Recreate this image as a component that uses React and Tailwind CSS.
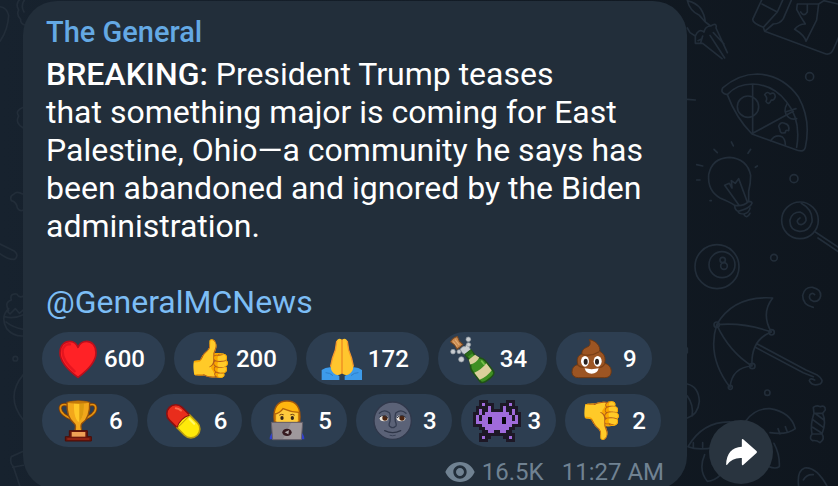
import React from 'react'
import clsx from 'clsx'
import { MdVisibility } from 'react-icons/md'

const INVADER = [
    '..kkk......kkk..',
    '..kpkkk..kkkpk..',
    '.kkkkpk..kpkkkk.',
    '.kpkkpkkkkpkkpk.',
    'kkpkppppppppkpkk',
    'kpkppppppppppkpk',
    'kpkppppppppppkpk',
    'kppppppppppppppk',
    'kkkppppppppppkkk',
    '..kkppppppppkk..',
    '...kkppkkppkk...',
    '..kkkkkkkkkkkk..',
    '..kpkk....kkpk..',
    '..kkk......kkk..',
]

const Icon = ({ children }) => (
    <svg viewBox="0 0 144 126" className="w-12 h-[42px] shrink-0 overflow-visible" aria-hidden="true">
        {children}
    </svg>
)

const Emoji = ({ children }) => (
    <span className="text-[37px] leading-[42px] font-['Noto_Color_Emoji',sans-serif]">{children}</span>
)

const Heart = () => (
    <Icon>
        <path d="M72 118C42 96 18 70 18 44C18 22 32 10 47 10C60 10 68 18 72 28C76 18 84 10 98 10C113 10 126 22 126 44C126 70 102 96 72 118Z" fill="#ff2226" stroke="#b90f1c" strokeWidth="5" strokeLinejoin="round" />
        <path d="M26 40C27 24 38 17 48 19M26 42C26 62 44 84 62 100" fill="none" stroke="#e5151f" strokeWidth="7" strokeLinecap="round" />
    </Icon>
)

const FoldedHands = () => (
    <Icon>
        <path d="M11 96Q24 86 42 88L54 108L64 114V126H11Z" fill="#3d9bea" />
        <path d="M132 96Q120 86 102 88L90 108L80 114V126H132Z" fill="#3d9bea" />
        <path d="M24 104Q36 104 44 112M120 104Q108 104 100 112" fill="none" stroke="#2b7fcb" strokeWidth="3" strokeLinecap="round" />
        <path d="M72 6C66 0 58 2 56 10L52 36C46 50 41 66 38 84Q38 104 54 110Q64 114 72 106Q80 114 90 110Q106 104 106 84C103 66 98 50 92 36L88 10C86 2 78 0 72 6Z" fill="#ffc62e" />
        <path d="M56 10L52 36C46 50 41 66 38 84M88 10L92 36C98 50 103 66 106 84" fill="none" stroke="#f3962c" strokeWidth="4" strokeLinecap="round" />
        <path d="M72 6V106" fill="none" stroke="#ee8c22" strokeWidth="4" strokeLinecap="round" />
    </Icon>
)

const Champagne = () => (
    <Icon>
        <g transform="translate(20 14) rotate(-38)">
            <path d="M-13-13Q0-19 13-13L9 2L11 16H-11L-9 2Z" fill="#c98a50" stroke="#7c4a22" strokeWidth="3" />
            <path d="M-6-9V10M2-10V10" stroke="#e3ac74" strokeWidth="3" />
        </g>
        <g fill="#c9cdd1" stroke="#8f979f" strokeWidth="2">
            <path d="M30 34Q40 22 46 26L52 14L58 28L64 40L50 52L38 46Z" />
            <circle cx="9" cy="41" r="7" />
            <circle cx="55" cy="4" r="7" />
            <circle cx="56" cy="20" r="6" />
            <circle cx="27" cy="41" r="6" />
            <circle cx="34" cy="64" r="8" />
        </g>
        <g transform="translate(54 43) rotate(-38)">
            <path d="M-11 0H11V22C12 34 25 36 25 52V92Q25 102 0 102Q-25 102-25 92V52C-25 36-12 34-11 22Z" fill="#3f8f22" stroke="#1f5216" strokeWidth="5" strokeLinejoin="round" />
            <path d="M-11 0H11V10H-11Z" fill="#2c6c1a" />
            <path d="M-12 19H12L17 33Q0 41-17 33Z" fill="#d9cf9b" />
            <path d="M-23 60Q0 66 23 60V86Q0 93-23 86Z" fill="#dccf9c" />
            <path d="M16 46V58" stroke="#79c14a" strokeWidth="5" strokeLinecap="round" />
        </g>
    </Icon>
)

const Poop = () => (
    <Icon>
        <path d="M64 5C84 8 98 24 95 40C108 46 114 58 110 76C126 80 132 94 129 106Q126 119 110 119H32Q14 119 12 104C12 90 18 82 30 80C24 64 30 52 42 48C40 36 50 30 60 26C68 22 68 12 64 5Z" fill="#9c5523" stroke="#6f3912" strokeWidth="3" strokeLinejoin="round" />
        <path d="M44 50Q70 56 92 42M30 82Q36 88 46 88M110 78Q104 88 96 88" fill="none" stroke="#7b4016" strokeWidth="4" strokeLinecap="round" />
        <ellipse cx="51" cy="70" rx="12" ry="16" fill="#fff" />
        <ellipse cx="89" cy="70" rx="12" ry="16" fill="#fff" />
        <ellipse cx="53" cy="71" rx="6" ry="9" fill="#2a211d" />
        <ellipse cx="87" cy="71" rx="6" ry="9" fill="#2a211d" />
        <path d="M50 91Q71 96 92 91Q88 107 71 107Q54 107 50 91Z" fill="#fff" />
    </Icon>
)

const Trophy = () => (
    <Icon>
        <path d="M44 17C30 10 18 14 19 26C20 42 38 50 54 58M102 17C116 10 126 14 125 26C124 42 106 50 90 58" fill="none" stroke="#7a3c08" strokeWidth="10" />
        <path d="M44 17C30 10 18 14 19 26C20 42 38 50 54 58M102 17C116 10 126 14 125 26C124 42 106 50 90 58" fill="none" stroke="#e2920f" strokeWidth="5" />
        <path d="M39 7Q73-2 107 7C108 38 100 60 84 70Q78 76 84 94H62Q68 76 60 70C46 60 38 38 39 7Z" fill="#f2a71b" stroke="#94500b" strokeWidth="4" />
        <path d="M60 10H90C90 40 86 58 73 66C62 56 59 36 60 10Z" fill="#ffc727" />
        <path d="M76 10H90C90 40 86 56 76 64Z" fill="#dc9a10" />
        <ellipse cx="73" cy="7" rx="32" ry="4" fill="#c47a0a" />
        <path d="M46 92H100V110H112V123H34V110H46Z" fill="#6b160c" stroke="#4c0d07" strokeWidth="3" strokeLinejoin="round" />
        <path d="M53 96H94V110H53Z" fill="#efa056" />
        <path d="M40 117H106" stroke="#b5301a" strokeWidth="3" />
    </Icon>
)

const Pill = () => (
    <Icon>
        <g transform="translate(73 64) rotate(-45)">
            <path d="M-27 0V-32A27 27 0 0 1 27-32V0Z" fill="#e92d1c" stroke="#8d0f10" strokeWidth="5" />
            <path d="M-27 0V32A27 27 0 0 0 27 32V0Z" fill="#ffe90a" stroke="#b79a10" strokeWidth="5" />
            <path d="M-27 0Q0-14 27 0" fill="#ffe90a" stroke="#8d0f10" strokeWidth="3" />
            <path d="M12-44Q18-38 18-28" fill="none" stroke="#ff6a4d" strokeWidth="6" strokeLinecap="round" />
            <path d="M18 8V28" stroke="#fff86a" strokeWidth="6" strokeLinecap="round" />
        </g>
    </Icon>
)

const Technologist = () => (
    <Icon>
        <path d="M20 118Q20 100 36 92H108Q124 100 124 118Z" fill="#2f3fd0" />
        <path d="M34 66C28 20 46 3 72 3C98 3 116 20 110 66Z" fill="#ffb60f" stroke="#a2560b" strokeWidth="4" />
        <path d="M40 66V40Q54 38 62 26Q84 38 104 38V66Z" fill="#ffcb3d" />
        <path d="M36 62V42Q50 40 60 26Q82 36 108 37V62" fill="none" stroke="#b3640d" strokeWidth="4" />
        <path d="M50 45Q55 41 61 44M83 44Q89 41 94 45" fill="none" stroke="#6b3a12" strokeWidth="3" strokeLinecap="round" />
        <ellipse cx="57" cy="54" rx="5" ry="6" fill="#33251b" />
        <ellipse cx="88" cy="54" rx="5" ry="6" fill="#33251b" />
        <path d="M25 67H119L115 119H29Z" fill="#8f898f" stroke="#655f69" strokeWidth="3" strokeLinejoin="round" />
        <path d="M84 69H117L113 117H60Z" fill="#aaa2a5" opacity="0.6" />
        <ellipse cx="72" cy="97" rx="14" ry="11" fill="#361a20" />
        <path d="M65 97L78 91L76 103Z" fill="#b0a8aa" />
    </Icon>
)

const Moon = () => (
    <Icon>
        <circle cx="74" cy="62" r="56" fill="#5b6277" stroke="#30384b" strokeWidth="4" />
        <path d="M34 40Q48 26 64 38Q68 44 66 64Q60 78 67 80Q74 86 81 80Q88 78 82 64Q80 44 84 38Q100 26 114 40" fill="none" stroke="#343c50" strokeWidth="4" strokeLinecap="round" />
        <ellipse cx="48" cy="55" rx="13" ry="9" fill="#efe8dd" />
        <ellipse cx="99" cy="55" rx="13" ry="9" fill="#efe8dd" />
        <circle cx="51" cy="54" r="8" fill="#4b2511" />
        <circle cx="102" cy="54" r="8" fill="#4b2511" />
        <path d="M34 52Q47 40 61 54M87 54Q99 40 113 52" fill="none" stroke="#2d3446" strokeWidth="3" />
        <path d="M50 92Q74 104 98 92" fill="none" stroke="#2d3446" strokeWidth="4" strokeLinecap="round" />
        <path d="M66 106Q74 109 82 106" fill="none" stroke="#3a4257" strokeWidth="3" strokeLinecap="round" />
    </Icon>
)

const Invader = () => (
    <Icon>
        <g shapeRendering="crispEdges">
            {INVADER.map((row, y) =>
                row.split('').map((c, x) =>
                    c === '.' ? null : (
                        <rect key={`${x}-${y}`} x={x * 9} y={y * 9} width="9" height="9" fill={c === 'k' ? '#1d1826' : '#a06bdb'} />
                    )
                )
            )}
            <path d="M44 50H58V72H44ZM86 50H100V72H86Z" fill="#08060c" />
        </g>
    </Icon>
)

const REACTIONS = [
    [
        { name: 'Heart', icon: <Heart />, count: 600 },
        { name: 'Thumbs up', icon: <Emoji>👍</Emoji>, count: 200 },
        { name: 'Folded hands', icon: <FoldedHands />, count: 172 },
        { name: 'Champagne', icon: <Champagne />, count: 34 },
        { name: 'Poop', icon: <Poop />, count: 9 },
    ],
    [
        { name: 'Trophy', icon: <Trophy />, count: 6 },
        { name: 'Pill', icon: <Pill />, count: 6 },
        { name: 'Technologist', icon: <Technologist />, count: 5 },
        { name: 'Moon', icon: <Moon />, count: 3 },
        { name: 'Invader', icon: <Invader />, count: 3 },
        { name: 'Thumbs down', icon: <Emoji>👎</Emoji>, count: 2 },
    ],
]

const Reaction = ({ name, icon, count }) => (
    <button
        type="button"
        aria-label={`${name} ${count}`}
        className={clsx(
            'flex items-center h-[53px] pl-4 rounded-full bg-[#2d3e51] text-2xl font-medium',
            count < 10 ? 'gap-[11px] pr-[15px]' : 'gap-[6px] pr-5'
        )}
    >
        <span className="flex items-center justify-center w-10 shrink-0">{icon}</span>
        <span>{count}</span>
    </button>
)

// Faint line drawings behind the chat
const Doodles = () => (
    <svg viewBox="0 0 838 486" preserveAspectRatio="xMaxYMin slice" className="absolute inset-0 w-full h-full" aria-hidden="true">
        <g fill="none" stroke="#222d39" strokeWidth="5" strokeLinecap="round" strokeLinejoin="round">
            <g transform="translate(670 0) scale(0.3333)">
                <path d="M52 2Q78 8 92 26Q104 44 106 66L122 78Q142 66 138 84L172 158M52 2Q60 34 88 46L106 66M52 84L60 98L76 108V130H98L156 176M92 128L98 108M76 108Q86 84 102 96M102 96Q106 78 122 78M120 106L164 174M130 98L162 132M84 122L96 116" />
                <path d="M276-2L248 58Q248 70 280 82L284 94L468 162Q484 164 490 148L516 90M276 12L322 36L340-4M322 36L280 82M366-4L340 56Q330 72 310 72L284 94M382 12H446L440 60L408 124Q404 106 374 88Q386 72 406 72L392 50L380 28ZM446 12L462 2L504 12M392 36Q402 52 412 36V14" />
                <path d="M158 264Q206 222 262 222Q340 226 386 292Q424 360 406 442Q402 460 374 448M158 264Q150 280 172 284Q200 252 248 252Q310 254 350 306Q394 360 380 442M172 284Q198 354 246 402L380 450M248 252V400L370 334" />
                <circle cx="234" cy="320" r="32" />
                <path d="M284 284Q292 272 300 282Q314 274 316 290Q312 302 304 300Q296 318 288 304Q294 294 284 284M326 378Q332 364 344 370Q360 374 356 392Q346 388 346 398Q330 402 330 390ZM352 310Q336 336 356 352Q366 360 380 356M302 422Q316 402 336 410Q346 418 346 434M346 336L378 326" />
                <circle cx="419" cy="230" r="12" />
                <path d="M52 298L76 300M184 426L190 438M132 448L142 458M242 448L234 460M80 494L98 498M256 502L262 498" />
            </g>
            <g transform="translate(670 160) scale(0.3333)">
                <path d="M194 136Q180 126 150 114Q112 92 116 44Q126-6 178-8Q232-4 242 46Q242 72 236 94V124M194 136Q194 150 204 154Q240 146 246 130Q246 124 236 124Q220 140 194 136M204 154Q206 162 222 162Q238 158 240 144M222 164Q230 178 240 160M206 134L164 76L178 70L186 84L184 62L196 70L206 56L232 126M80 60H90M120 122H124" />
                <circle cx="372" cy="56" r="12" />
                <circle cx="390" cy="181" r="55" />
                <path d="M394 130Q430 150 426 186Q416 216 388 214Q358 210 360 180Q366 156 390 156Q410 164 408 182Q400 198 386 192Q376 182 390 174M436 216L512 266M444 234L506 276" />
                <circle cx="312" cy="293" r="10" />
                <circle cx="141" cy="320" r="66" />
                <circle cx="156" cy="314" r="39" />
                <circle cx="158" cy="300" r="8" />
                <circle cx="162" cy="318" r="10" />
                <path d="M430 442Q398 436 398 406Q404 380 428 382Q454 388 452 408Q448 426 430 424Q414 418 420 404Q428 396 434 404" />
            </g>
            <g transform="translate(670 320) scale(0.3333)">
                <path d="M140 14Q190-74 308-66Q272-20 304 36Q220 6 140 14Q110 110 180 202Q186 142 246 138Q178 96 140 14M246 138Q242 60 304 36M262 72L408 150L440 164Q466 182 450 192Q426 200 418 182Q420 172 434 180M256 82L400 158L430 170" />
                <circle cx="140" cy="14" r="8" />
                <circle cx="305" cy="37" r="8" />
                <circle cx="247" cy="138" r="8" />
                <circle cx="181" cy="202" r="6" />
                <circle cx="292" cy="218" r="8" />
                <path d="M52 192Q86 200 88 244Q84 284 52 294M52 228Q72 256 66 288M52 84V98" />
                <path d="M54 380Q100 300 190 306M54 380Q84 392 134 382M70 382V368M98 382V368M228 302Q256 264 300 266Q362 276 376 326Q350 346 300 338M330 342L324 326M352 336L346 320M104 404Q84 450 112 484Q134 482 150 466M312 370Q330 404 328 440Q318 448 296 440" />
                <path d="M430 262Q440 254 450 260Q466 254 466 270L458 280Q470 306 456 342Q466 356 450 368Q440 360 428 362Q416 356 426 342Q420 316 432 280ZM432 280H458M426 342H456M430 300L460 322M428 322L456 340M438 282L462 300" />
                <path d="M386 500Q380 452 404 444Q440 440 472 500M400 480Q410 462 430 464" />
            </g>
            <g transform="translate(0 120) scale(0.3333)">
                <path d="M70-38Q44-28 56-12Q44 10 70 24M68 222Q50 212 42 222Q28 228 34 242Q50 246 52 264Q60 276 70 270M-4 370L44 394Q58 406 44 418Q24 420-4 398M26 572Q12 546 34 540Q28 520 50 522Q60 536 70 528M26 566Q0 590 20 626Q40 650 70 648M14 590Q40 598 70 584M18 606Q40 624 70 628M20 572L30 582L46 566L58 580L70 570M70 764Q14 830 70 900M70 994L34 1010Q28 1028 40 1040L60 1100M38 1042L70 1036" />
                <circle cx="46" cy="716" r="7" />
            </g>
            <g transform="scale(0.3333)">
                <path d="M-4 20Q20 20 26 46Q24 90 0 124M62-4Q44 10 56 30Q48 44 62 58Q60 70 76 76M76-4Q60 16 72 36" />
            </g>
        </g>
    </svg>
)

const App = () => {
    return (
        <main className="relative flex items-end justify-between h-screen overflow-hidden bg-linear-to-r from-[#17222e] to-[#0f161e] font-['Roboto',sans-serif] text-white">
            <Doodles />
            <article className="relative self-start flex-1 ml-[23px] mt-px pt-3 pb-1.5 px-[19px] rounded-[34px] bg-[#222e3a]">
                <div className="px-1">
                    <h1 className="text-[29px] leading-[38px] font-medium text-[#64a9e4]">The General</h1>
                    <p className="mt-1 text-[32px] leading-[38px]">
                        <strong className="font-medium">BREAKING:</strong> President Trump teases
                        <br />
                        that something major is coming for East Palestine, Ohio—a community he says has been abandoned and ignored by the Biden administration.
                    </p>
                    <p className="mt-[38px] text-[32px] leading-[38px]">
                        <a href="#GeneralMCNews" className="text-[#7cbdf5]">@GeneralMCNews</a>
                    </p>
                </div>
                <div className="flex flex-col gap-[9px] mt-[11px]">
                    {REACTIONS.map((row, i) => (
                        <div key={i} className="flex gap-[9px]">
                            {row.map((r) => (
                                <Reaction key={r.name} {...r} />
                            ))}
                        </div>
                    ))}
                </div>
                <footer className="flex items-center justify-end h-6 mt-[13px] pr-1 text-2xl leading-6 text-[#708292]">
                    <MdVisibility size={32} className="mr-1.5" aria-hidden="true" />
                    <span>16.5K</span>
                    <time className="ml-[18px]">11:27 AM</time>
                </footer>
            </article>
            <button
                type="button"
                aria-label="Share"
                className="relative flex items-center justify-center size-16 shrink-0 mt-auto ml-[22px] mr-[65px] mb-0.5 rounded-full bg-[#29343f]"
            >
                <svg viewBox="0 0 98 84" className="w-[33px] h-7" aria-hidden="true">
                    <path d="M3 79Q4 30 50 26V6Q50 1 54 4L94 39Q97 42 94 45L54 81Q50 83 50 78V60Q22 58 6 80Q3 83 3 79Z" fill="#fff" />
                </svg>
            </button>
        </main>
    )
}

export default App
